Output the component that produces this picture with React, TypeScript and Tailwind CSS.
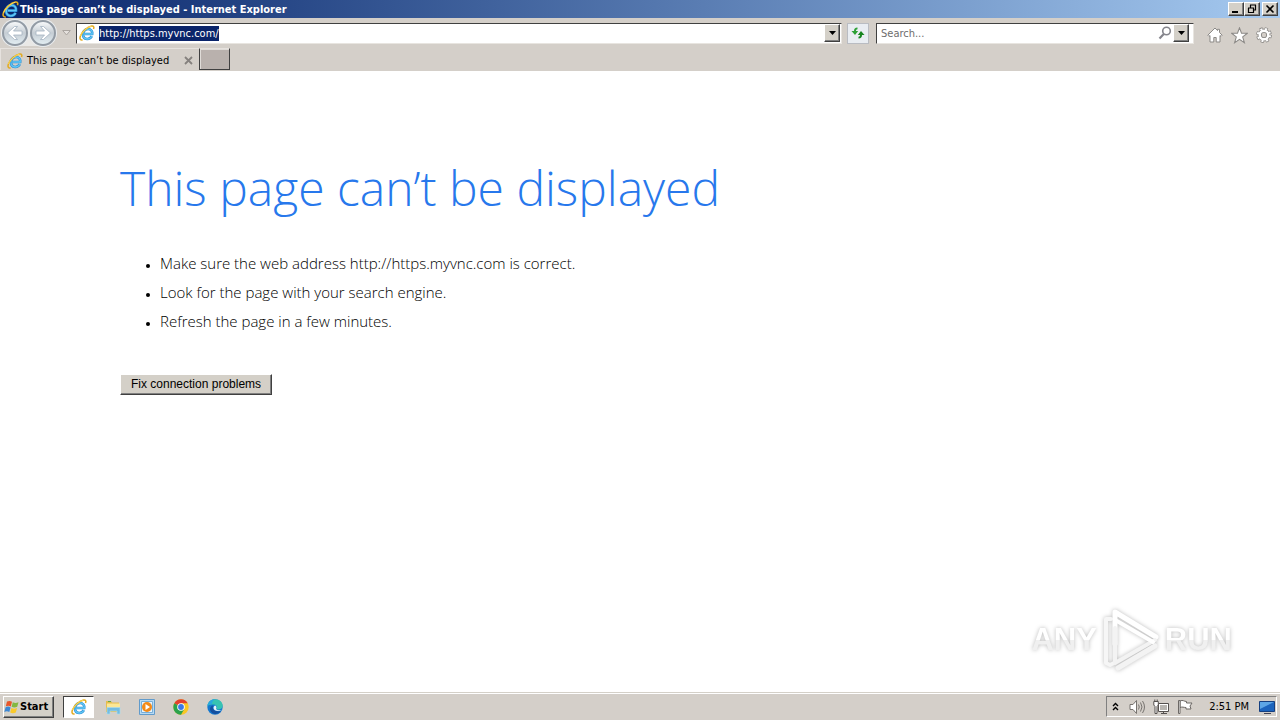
import type { ReactNode } from 'react';

const raised =
    'border border-t-white border-l-white border-r-[#404040] border-b-[#404040] bg-[#d4d0c8] shadow-[inset_-1px_-1px_0_#808080]';
const sunken = 'border border-t-[#404040] border-l-[#404040] border-r-[#e8e5e0] border-b-[#e8e5e0] bg-white';

function IeIcon({ className = 'size-4' }: { className?: string }) {
    return (
        <svg viewBox="0 0 16 16" className={`shrink-0 ${className}`} fill="none" aria-hidden="true">
            <path d="M12.800 11.200C11 14.800 5.600 15 4.200 11.300 3 7.500 5.500 4 9 4c3 0 4.600 2.200 4.200 5H5.500" stroke="#2b8fd6" strokeWidth="2.600" />
            <path d="M12.800 11.200C11 14.800 5.600 15 4.200 11.300 3 7.500 5.500 4 9 4c3 0 4.600 2.200 4.200 5H5.500" stroke="#62c8f5" strokeWidth="1.300" />
            <path d="M3.600 15C1.200 15.400.5 13.500 1.400 11 3 6.500 8.500 1.800 12.600 1c2.300-.3 2.600 1.200 1.900 3" stroke="#e2aa20" strokeWidth="1.500" />
            <path d="M1.500 11C3.200 6.500 8.500 2 12.600 1.200" stroke="#ffe05e" strokeWidth=".9" />
        </svg>
    );
}

function NavArrow({ label, flip }: { label: string; flip?: boolean }) {
    return (
        <button
            type="button"
            aria-label={label}
            className="flex size-[26px] items-center justify-center rounded-full border-2 border-[#929ba5] bg-linear-to-b from-[#f7f9fa] via-[#c5cdd4] to-[#e2edf2] shadow-[0_0_0_1px_#e9edf0]"
        >
            <svg viewBox="0 0 18 18" className={flip ? 'size-[18px] rotate-180' : 'size-[18px]'} aria-hidden="true">
                <path d="M1.500 9 8.500 2.500h3L7.500 7H16v4H7.500l4 4.500h-3z" fill="#fff" stroke="#a3b3c2" strokeWidth=".8" />
            </svg>
        </button>
    );
}

function DropButton({ label }: { label: string }) {
    return (
        <button type="button" aria-label={label} className={`flex h-[18px] w-4 shrink-0 items-center justify-center ${raised}`}>
            <svg viewBox="0 0 7 4" className="h-1 w-[7px]" aria-hidden="true">
                <path d="M0 0h7L3.500 4z" />
            </svg>
        </button>
    );
}

function CaptionButton({ label, children }: { label: string; children: ReactNode }) {
    return (
        <button type="button" aria-label={label} className={`flex h-3.5 w-4 items-center justify-center ${raised}`}>
            <svg viewBox="0 0 10 10" className="size-2.5" fill="none" stroke="#000" aria-hidden="true">
                {children}
            </svg>
        </button>
    );
}

function TitleBar() {
    return (
        <header className="flex h-[18px] items-center bg-linear-to-r from-[#0a246a] to-[#a6caf0] pr-0.5 pl-0.5">
            <IeIcon className="size-[17px]" />
            <h1 className="flex-1 pt-px pl-px text-[11px] leading-4 font-bold whitespace-nowrap text-white">
                This page can’t be displayed - Internet Explorer
            </h1>
            <div className="flex">
                <CaptionButton label="Minimize">
                    <path d="M1 8h6" strokeWidth="2" />
                </CaptionButton>
                <CaptionButton label="Restore">
                    <path d="M3 1h6M8.500 1v5H7M3.500 1v3M1 4h6M1.500 4v4.500h5V4" strokeWidth="1.200" />
                </CaptionButton>
                <div className="ml-0.5">
                    <CaptionButton label="Close">
                        <path d="m1.500 1.500 7 7m0-7-7 7" strokeWidth="1.600" />
                    </CaptionButton>
                </div>
            </div>
        </header>
    );
}

function NavBar() {
    return (
        <div className="flex h-[30px] items-center pl-0.5">
            <div className="flex gap-0.5 rounded-full bg-[#e9e8e6]">
                <NavArrow label="Back" />
                <NavArrow label="Forward" flip />
            </div>
            <button type="button" aria-label="Recent pages" className="flex w-5 justify-center">
                <svg viewBox="0 0 9 6" className="h-1.5 w-[9px]" aria-hidden="true">
                    <path d="M.7.5h7.600L4.500 5z" fill="#e5e1dd" stroke="#aaa5a0" />
                </svg>
            </button>

            <div className={`flex h-[21px] min-w-0 flex-1 items-center pr-px pl-0.5 ${sunken}`}>
                <IeIcon />
                <input
                    aria-label="Address"
                    defaultValue="http://https.myvnc.com/"
                    className="ml-1 field-sizing-content h-[15px] bg-[#0a246a] pt-px text-[11px] text-white outline-none"
                />
                <div className="flex-1" />
                <DropButton label="Show address list" />
            </div>

            <button
                type="button"
                aria-label="Refresh"
                className="mx-[5px] flex h-[21px] w-[22px] items-center justify-center border border-[#b9bcc2] bg-[#e9edf2]"
            >
                <svg viewBox="0 0 14 12" className="h-3 w-3.5" aria-hidden="true">
                    <path d="M6.500.5C4 .5 3 1.700 3 4H.5L4 8l3.200-4H5c0-1 .3-1.500 1.500-1.700z" fill="#2da136" />
                    <path d="M7.500 11.500c2.500 0 3.500-1.200 3.500-3.500h2.500L10 4 6.800 8H9c0 1-.3 1.500-1.500 1.700z" fill="#17851f" />
                </svg>
            </button>

            <div className={`ml-0.5 flex h-[21px] w-[318px] items-center pr-1 pl-1 ${sunken}`}>
                <input
                    aria-label="Search"
                    placeholder="Search..."
                    className="min-w-0 flex-1 pt-0.5 text-[11px] outline-none placeholder:text-[#6d6d6d]"
                />
                <button type="button" aria-label="Run search" className="mr-px">
                    <svg viewBox="0 0 14 14" className="size-3.5" fill="none" stroke="#85858c" aria-hidden="true">
                        <circle cx="8.500" cy="5" r="3.800" strokeWidth="1.600" />
                        <path d="M5.800 8 1.500 12.500" strokeWidth="2.200" />
                    </svg>
                </button>
                <DropButton label="Search providers" />
            </div>

            <div className="flex gap-2 pt-1 pr-2 pl-[13px]">
                <button type="button" aria-label="Home">
                    <svg viewBox="0 0 16 16" className="size-4" fill="#fff" stroke="#8b8986" aria-hidden="true">
                        <path d="M8 1 .8 8.200l1.200 1.200 1-.9v6.500h3.800v-4.500h2.400V15H13V8.500l1 .9 1.200-1.200-2.700-2.700V2.300h-2v1.300z" />
                    </svg>
                </button>
                <button type="button" aria-label="Favorites">
                    <svg viewBox="0 0 16 16" className="size-[17px]" fill="#fff" stroke="#8b8986" aria-hidden="true">
                        <path d="m8 .8 1.900 5.100h5.500L11 9.300l1.600 5.500L8 11.600l-4.600 3.200L5 9.300.6 5.900h5.500z" />
                    </svg>
                </button>
                <button type="button" aria-label="Tools">
                    <svg viewBox="0 0 16 16" className="size-4" fill="none" aria-hidden="true">
                        <circle cx="8" cy="8" r="6.300" stroke="#8b8986" strokeWidth="3.200" strokeDasharray="2.900 2.048" />
                        <circle cx="8" cy="8" r="4.300" stroke="#8b8986" strokeWidth="4.200" />
                        <circle cx="8" cy="8" r="6" stroke="#fff" strokeWidth="2.200" strokeDasharray="1.900 2.812" strokeDashoffset="-.4" />
                        <circle cx="8" cy="8" r="4.300" stroke="#fff" strokeWidth="2.400" />
                    </svg>
                </button>
            </div>
        </div>
    );
}

function TabBar() {
    return (
        <div className="flex h-[23px] items-start text-[11px]">
            <div className="flex h-[22px] w-[199px] items-center border-t border-l border-[#e6e2de] pt-0.5 pr-1.5 pl-1.5">
                <IeIcon />
                <span className="flex-1 pl-1 whitespace-nowrap">This page can’t be displayed</span>
                <button type="button" aria-label="Close tab">
                    <svg viewBox="0 0 9 9" className="size-[9px]" stroke="#85817e" strokeWidth="1.800" aria-hidden="true">
                        <path d="m1 1 7 7m0-7-7 7" />
                    </svg>
                </button>
            </div>
            <button
                type="button"
                aria-label="New tab"
                className="h-[22px] w-[31px] border border-t-[#e6e2de] border-r-[#404040] border-b-[#404040] border-l-[#404040] bg-[#b9b1ad] shadow-[inset_1px_1px_0_#e0dcd8]"
            />
        </div>
    );
}

function Watermark() {
    return (
        <div
            aria-label="ANY RUN"
            className="absolute right-12 bottom-5 flex items-center gap-1.5 font-['Liberation_Sans_Narrow','Liberation_Sans',sans-serif] text-[31px] leading-10 font-bold drop-shadow-[0_0_2px_#bbb]"
        >
            <span className="bg-linear-to-b from-white from-50% to-[#f0f0f0] to-50% bg-clip-text text-transparent">ANY</span>
            <svg viewBox="0 0 56 64" className="h-16 w-14" fill="none" strokeLinejoin="round" strokeLinecap="round" aria-hidden="true">
                <path d="M15 60 52 38" stroke="#f3f3f3" strokeWidth="5" />
                <path d="M8 11H3v44l4 2 4-2" stroke="#f6f6f6" strokeWidth="4" />
                <path d="M12 36V4l41 25" stroke="#fff" strokeWidth="5" />
                <path d="M12 20v35l40-23" stroke="#f3f3f3" strokeWidth="4" />
                <path d="M14 13 50 34" stroke="#fff" strokeWidth="4" />
            </svg>
            <span className="bg-linear-to-b from-white from-50% to-[#f0f0f0] to-50% bg-clip-text text-transparent">RUN</span>
        </div>
    );
}

function ErrorPage() {
    return (
        <main className="relative flex-1 bg-white px-[120px] pt-[82px] font-['Open_Sans','Noto_Sans',sans-serif] font-light">
            <h2 className="text-[48px] leading-[70px] text-[#2778ec]">This page can’t be displayed</h2>
            <ul className="mt-[26px] list-disc pl-10 text-[15px] leading-[29px] text-black marker:text-[10px]">
                <li>Make sure the web address http://https.myvnc.com is correct.</li>
                <li>Look for the page with your search engine.</li>
                <li>Refresh the page in a few minutes.</li>
            </ul>
            <button
                type="button"
                className={`mt-[38px] h-[21px] px-2.5 pb-0.5 font-['Liberation_Sans',Arial,sans-serif] text-[12px] leading-4 font-normal whitespace-nowrap ${raised}`}
            >
                Fix connection problems
            </button>
            <Watermark />
        </main>
    );
}

function TaskBar() {
    return (
        <footer className="flex h-7 items-center border-t border-[#d4d0c8] pr-[3px] pl-[3px] shadow-[inset_0_1px_0_#fff]">
            <button type="button" className={`flex h-[22px] w-[51px] items-center text-[11px] font-bold ${raised}`}>
                <svg viewBox="0 0 16 16" className="size-4 shrink-0" aria-hidden="true">
                    <path d="M3 2.500c2-1 3.500-.7 5 .2L6.800 7.500c-1.600-1-3-1-5-.2z" fill="#e8562a" />
                    <path d="M8.800 3.200c1.700 1 3.500 1 5.700.1l-1.300 4.500c-2 1-3.800.9-5.600 0z" fill="#83b841" />
                    <path d="M1.600 8.200c2-.9 3.500-.7 5 .2l-1.300 4.700c-1.600-1-3-1-5-.2z" fill="#3c87d4" />
                    <path d="M7.400 8.900c1.700 1 3.500 1 5.700.1l-1.300 4.500c-2 1-3.800.9-5.600 0z" fill="#f9c92b" />
                </svg>
                Start
            </button>

            <nav aria-label="Programs" className="ml-[9px] flex flex-1 items-center">
                <button
                    type="button"
                    aria-label="Internet Explorer"
                    className="mr-[11px] flex h-[22px] w-[31px] items-center justify-center border border-t-[#404040] border-r-white border-b-white border-l-[#404040] bg-white"
                >
                    <IeIcon />
                </button>
                <div className="flex gap-[18px]">
                    <button type="button" aria-label="Explorer">
                        <svg viewBox="0 0 16 16" className="size-4" aria-hidden="true">
                            <path d="M1 2h5l1 1.500h7V13H1z" fill="#e5bd4e" />
                            <path d="M2 4.500h13V12H2z" fill="#fbe795" />
                            <path d="M3 2.500h3" stroke="#62a948" />
                            <path d="M2 8.500h13V15h-3v-3H5v3H2z" fill="#72bce2" stroke="#a9dbed" strokeWidth=".7" />
                        </svg>
                    </button>
                    <button type="button" aria-label="Media Player">
                        <svg viewBox="0 0 16 16" className="size-4" aria-hidden="true">
                            <path d="M.5.500h15v15H.5z" fill="#b8daf3" stroke="#619bcb" />
                            <path d="M2.500 2.500h11v11h-11z" fill="#e7f3fb" stroke="#76aed8" />
                            <circle cx="8" cy="8" r="5" fill="#f38a18" />
                            <path d="M6.500 5v6L11 8z" fill="#fff" />
                        </svg>
                    </button>
                    <button type="button" aria-label="Chrome">
                        <svg viewBox="0 0 16 16" className="size-4" aria-hidden="true">
                            <circle cx="8" cy="8" r="7.700" fill="#f9c724" />
                            <path d="M8 8 1.300 4.200a7.700 7.700 0 0 1 13.400 0H8z" fill="#e2402f" />
                            <path d="M1.300 4.200A7.700 7.700 0 0 0 8 15.700l3.300-5.800L8 8z" fill="#2ba24c" />
                            <circle cx="8" cy="8" r="3.800" fill="#fff" />
                            <circle cx="8" cy="8" r="2.900" fill="#3b78e7" />
                        </svg>
                    </button>
                    <button type="button" aria-label="Edge">
                        <svg viewBox="0 0 16 16" className="size-4" aria-hidden="true">
                            <circle cx="8" cy="8" r="7.700" fill="#1377cf" />
                            <path d="M.4 7C1 2.800 4 .3 8 .3c4.500 0 7.700 3 7.700 6.300 0 2.500-2 4-4.200 4-1.500 0-2.400-.5-2-1.200C10.500 7.500 9 5.500 6 5.500 3.500 5.500 1.500 6 .4 7z" fill="#36c3b2" />
                            <path d="M.4 7C1 3 4 .3 8 .3c-2 1-3 2.700-3 5-2 0-3.700.5-4.600 1.700z" fill="#28a8de" />
                            <path d="M6 6.500c-1 4 2 6.500 7.800 5.800C11 16 5.500 16 3.500 12 2.500 9.500 3.500 7 6 6.500z" fill="#144f9e" />
                            <path d="M8.300 6.500c1.200 1 1.500 2 .8 3.200.2 1.400 2.800 2 5.900 1-3 2.300-8.400 1.300-8.500-1.700 0-1.200.7-2.200 1.800-2.500z" fill="#e7f2fa" />
                        </svg>
                    </button>
                </div>
            </nav>

            <div className="flex h-[21px] items-center border border-t-[#808080] border-r-white border-b-white border-l-[#808080] pr-px pl-[5px]">
                <button type="button" aria-label="Show hidden icons">
                    <svg viewBox="0 0 7 9" className="h-[9px] w-[7px]" fill="none" stroke="#000" strokeWidth="1.400" aria-hidden="true">
                        <path d="m1 4 2.500-2.500L6 4M1 8l2.500-2.500L6 8" />
                    </svg>
                </button>
                <div className="ml-2.5 flex gap-2">
                    <svg viewBox="0 0 16 16" className="size-4" fill="none" stroke="#77736f" role="img" aria-label="Volume">
                        <path d="M1 5.500h3l3.500-4v13L4 10.500H1z" fill="#fff" />
                        <path d="M9.500 5.500q1.500 2.500 0 5M11.500 3.500q3 4.500 0 9M13.500 2q4 6 0 12" />
                    </svg>
                    <svg viewBox="0 0 16 16" className="size-4" fill="#fff" stroke="#55514e" role="img" aria-label="Network">
                        <path d="M5.500 4.500h10v8h-10zM8 14.500h6M10.500 12.500v2" />
                        <path d="M7 6h7v5H7z" fill="#b8b5b0" stroke="none" />
                        <path d="M.8 2.500h4.500V6L4 7.500v7H2V7.500L.8 6zM1.800 2.500V.5M4.200 2.500V.5" />
                    </svg>
                    <svg viewBox="0 0 16 16" className="size-4" fill="#fff" stroke="#6c6865" role="img" aria-label="Action Center">
                        <path d="M3 2c3-1.500 4 .5 6.500.5L9.500 4H15l-2 3 1 3H9V8.500C6.500 8.500 5.500 7.500 3 8.500z" />
                        <path d="M1.500 1.500H3v13H1.500z" />
                    </svg>
                </div>
                <time className="ml-4 text-[11px] whitespace-nowrap">2:51 PM</time>
                <button type="button" aria-label="Show desktop" className="ml-2.5">
                    <svg viewBox="0 0 16 16" className="size-4" aria-hidden="true">
                        <path d="M.5 2.500h15v10H.5z" fill="#1c64bd" stroke="#153f80" />
                        <path d="M1 3h14L1 10z" fill="#5da6e6" />
                        <path d="M5 14.500h7" stroke="#445" />
                    </svg>
                </button>
            </div>
        </footer>
    );
}

export default function App() {
    return (
        <div className="flex min-h-screen flex-col bg-[#d4cfc9] font-['DejaVu_Sans_Condensed','DejaVu_Sans',sans-serif] leading-4 text-black">
            <TitleBar />
            <NavBar />
            <TabBar />
            <ErrorPage />
            <TaskBar />
        </div>
    );
}
